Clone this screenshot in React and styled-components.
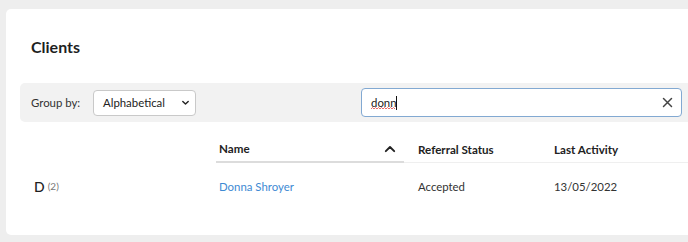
import React, { useEffect, useRef } from "react";
import styled, { createGlobalStyle } from "styled-components";

const GlobalStyle = createGlobalStyle`
  html, body {
    margin: 0;
    padding: 0;
    background: #eeeeee;
    overflow: hidden;
  }
  body {
    font-family: Lato, "Open Sans", sans-serif;
    color: #222;
  }
`;

const Page = styled.div`
  padding: 9px 0 0 6px;
`;

const Card = styled.section`
  background: #fff;
  border-radius: 5px 0 0 5px;
  width: 682px;
  height: 226px;
  padding: 0 0 0 14px;
  box-sizing: border-box;
`;

const Title = styled.h1`
  margin: 0;
  padding: 28px 0 0 11px;
  height: 74px;
  box-sizing: border-box;
  font-size: 16px;
  font-weight: 700;
  color: #1f1f1f;
  line-height: 20px;
`;

const Toolbar = styled.div`
  display: flex;
  align-items: center;
  height: 39px;
  background: #f2f2f2;
  border-radius: 5px 0 0 5px;
  padding: 0 0 0 11px;
`;

const Label = styled.span`
  font-size: 11.4px;
  color: #333;
  width: 62px;
`;

const SelectBox = styled.div`
  display: flex;
  align-items: center;
  justify-content: space-between;
  width: 103px;
  height: 26px;
  box-sizing: border-box;
  padding: 0 5px 0 9px;
  background: #fff;
  border: 1px solid #c9c9c9;
  border-radius: 4px;
  font-size: 11.4px;
  color: #222;
`;

const SearchWrap = styled.div`
  position: relative;
  margin-left: 165px;
  width: 321px;
  height: 29px;
`;

const SearchInput = styled.input`
  width: 100%;
  height: 100%;
  box-sizing: border-box;
  border: 1px solid #82a9d2;
  border-radius: 4px;
  padding: 0 30px 0 9px;
  font-family: Lato, sans-serif;
  font-size: 11.4px;
  color: #222;
  outline: none;
  caret-color: #111;
`;

const SpellMark = styled.svg`
  position: absolute;
  left: 10px;
  top: 19px;
  pointer-events: none;
`;

const Caret = styled.span`
  position: absolute;
  left: 35px;
  top: 8px;
  width: 1px;
  height: 14px;
  background: #111;
`;

const ClearButton = styled.span`
  position: absolute;
  right: 9px;
  top: 9px;
  width: 11px;
  height: 11px;
  display: flex;
`;

const Table = styled.div`
  display: grid;
  grid-template-columns: 196px 188px 136px 1fr;
`;

const HeadCell = styled.div`
  display: flex;
  align-items: center;
  justify-content: space-between;
  height: 41px;
  padding: 14px 8px 0 ${(p) => p.$pad}px;
  box-sizing: border-box;
  font-size: 11.6px;
  font-weight: 700;
  color: #222;
  border-bottom: ${(p) => (p.$sorted ? "2px solid #dcdcdc" : p.$blank ? "none" : "1px solid #efefef")};
`;

const Cell = styled.div`
  display: flex;
  align-items: center;
  height: 46px;
  padding-left: ${(p) => p.$pad}px;
  font-size: 11.4px;
  color: ${(p) => p.$color || "#333"};
`;

const GroupLetter = styled.span`
  font-size: 14px;
  font-weight: 500;
  color: #1f1f1f;
  margin-right: 3px;
`;

const GroupCount = styled.span`
  font-size: 10px;
  color: #777;
`;

const Chevron = ({ up, size = 10 }) => (
  <svg width={size} height={size} viewBox="0 0 10 10" fill="none">
    <path
      d={up ? "M1.5 6.8 L5 3.3 L8.5 6.8" : "M2 3.8 L5 6.6 L8 3.8"}
      stroke="#222"
      strokeWidth="1.6"
      strokeLinecap="round"
      strokeLinejoin="round"
    />
  </svg>
);

export default function App() {
  const ref = useRef(null);
  useEffect(() => {
    if (ref.current) {
      ref.current.focus();
      ref.current.setSelectionRange(4, 4);
    }
  }, []);

  return (
    <Page>
      <GlobalStyle />
      <Card>
        <Title>Clients</Title>
        <Toolbar>
          <Label>Group by:</Label>
          <SelectBox>
            Alphabetical
            <Chevron size={9} />
          </SelectBox>
          <SearchWrap>
            <SearchInput ref={ref} defaultValue="donn" spellCheck={false} />
            <SpellMark width="25" height="3" viewBox="0 0 25 3">
              <path
                d="M0 2 L1.5 0.5 L3 2 L4.5 0.5 L6 2 L7.5 0.5 L9 2 L10.5 0.5 L12 2 L13.5 0.5 L15 2 L16.5 0.5 L18 2 L19.5 0.5 L21 2 L22.5 0.5 L24 2"
                stroke="#e35b5b"
                strokeWidth="0.9"
                fill="none"
              />
            </SpellMark>
            <Caret />
            <ClearButton>
              <svg width="11" height="11" viewBox="0 0 11 11">
                <path d="M1.5 1.5 L9.5 9.5 M9.5 1.5 L1.5 9.5" stroke="#444" strokeWidth="1.5" strokeLinecap="round" />
              </svg>
            </ClearButton>
          </SearchWrap>
        </Toolbar>
        <Table>
          <HeadCell $blank />
          <HeadCell $sorted $pad={3}>
            Name
            <Chevron up size={12} />
          </HeadCell>
          <HeadCell $pad={14}>Referral Status</HeadCell>
          <HeadCell $pad={14}>Last Activity</HeadCell>

          <Cell $pad={14}>
            <GroupLetter>D</GroupLetter>
            <GroupCount>(2)</GroupCount>
          </Cell>
          <Cell $pad={3} $color="#3e8ad3">Donna Shroyer</Cell>
          <Cell $pad={14}>Accepted</Cell>
          <Cell $pad={14}>13/05/2022</Cell>
        </Table>
      </Card>
    </Page>
  );
}
